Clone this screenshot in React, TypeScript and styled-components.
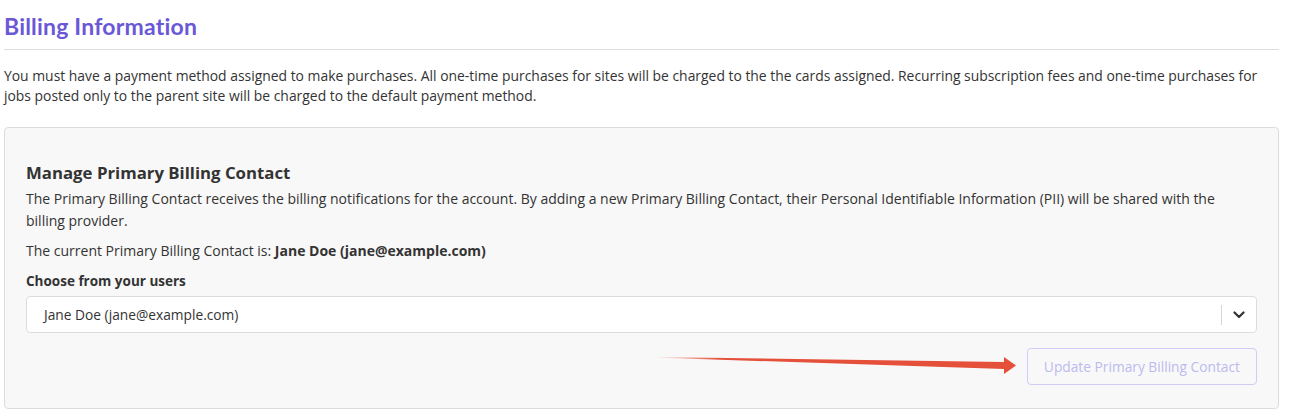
import React, { useState } from 'react'
import styled, { createGlobalStyle } from 'styled-components'

const GlobalStyle = createGlobalStyle`
  *, *::before, *::after {
    box-sizing: border-box;
  }
  body {
    margin: 0;
    background: #fff;
    font-family: "Open Sans", Lato, Arial, sans-serif;
    color: #333;
  }
`

const users = ['Jane Doe (jane@example.com)', 'John Smith (john@example.com)']

const App = () => {
  const [selected, setSelected] = useState(users[0])

  return (
    <>
      <GlobalStyle />
      <Page>
        <Title>Billing Information</Title>
        <Divider />
        <Intro>
          You must have a payment method assigned to make purchases. All one-time purchases for sites will be charged to the the cards assigned. Recurring subscription fees and one-time purchases for jobs posted only to the parent site will be charged to the default payment method.
        </Intro>
        <Card>
          <CardTitle>Manage Primary Billing Contact</CardTitle>
          <CardText>
            The Primary Billing Contact receives the billing notifications for the account. By adding a new Primary Billing Contact, their Personal Identifiable Information (PII) will be shared with the billing provider.
          </CardText>
          <CurrentLine>
            The current Primary Billing Contact is: <strong>Jane Doe (jane@example.com)</strong>
          </CurrentLine>
          <FieldLabel>Choose from your users</FieldLabel>
          <SelectBox>
            <SelectValue>{selected}</SelectValue>
            <SelectDivider />
            <ChevronWrap onClick={() => setSelected(selected === users[0] ? users[1] : users[0])}>
              <svg width="12" height="8" viewBox="0 0 12 8">
                <path d="M1.5 1.5 L6 6 L10.5 1.5" fill="none" stroke="#333" strokeWidth="2.2" strokeLinecap="round" strokeLinejoin="round" />
              </svg>
            </ChevronWrap>
          </SelectBox>
          <ActionRow>
            <Arrow width="370" height="24" viewBox="0 0 370 24">
              <defs>
                <linearGradient id="fade" x1="0" x2="1" y1="0" y2="0">
                  <stop offset="0" stopColor="#e5503a" stopOpacity="0" />
                  <stop offset="0.18" stopColor="#e5503a" stopOpacity="1" />
                  <stop offset="1" stopColor="#e5503a" stopOpacity="1" />
                </linearGradient>
              </defs>
              <polygon points="0,4 350,9 350,4 362,12.5 350,21 350,16 0,4.6" fill="url(#fade)" />
            </Arrow>
            <UpdateButton disabled>Update Primary Billing Contact</UpdateButton>
          </ActionRow>
        </Card>
      </Page>
    </>
  )
}

const Page = styled.div`
  padding: 12px 12px 0 4px;
`

const Title = styled.h1`
  margin: 0;
  font-family: Lato, "Open Sans", sans-serif;
  font-size: 23px;
  font-weight: 700;
  color: #6a58d8;
  line-height: 28px;
  letter-spacing: 0.2px;
`

const Divider = styled.hr`
  border: none;
  border-top: 1px solid #dcdcdc;
  margin: 9px 0 16px;
`

const Intro = styled.p`
  margin: 0 0 21px;
  font-size: 13.9px;
  line-height: 20px;
  color: #333;
`

const Card = styled.section`
  position: relative;
  background: #f8f8f8;
  border: 1px solid #dcdcdc;
  border-radius: 4px;
  padding: 33px 21px 23px;
`

const CardTitle = styled.h2`
  margin: 0 0 3px;
  font-size: 16.8px;
  font-weight: 700;
  color: #333;
  line-height: 24px;
`

const CardText = styled.p`
  margin: 0 0 8px;
  font-size: 14px;
  line-height: 22px;
  color: #333;
`

const CurrentLine = styled(CardText)`
  margin-bottom: 8px;
  strong {
    font-weight: 700;
  }
`

const FieldLabel = styled.div`
  font-size: 13.5px;
  font-weight: 700;
  line-height: 22px;
  margin-bottom: 4px;
`

const SelectBox = styled.div`
  display: flex;
  align-items: center;
  height: 37px;
  background: #fff;
  border: 1px solid #dcdcdc;
  border-radius: 4px;
`

const SelectValue = styled.div`
  flex: 1;
  padding-left: 17px;
  font-size: 13.75px;
  color: #333;
`

const SelectDivider = styled.div`
  width: 1px;
  height: 20px;
  background: #d6d6d6;
`

const ChevronWrap = styled.div`
  width: 34px;
  display: flex;
  justify-content: center;
  align-items: center;
  cursor: pointer;
`

const ActionRow = styled.div`
  position: relative;
  display: flex;
  justify-content: flex-end;
  margin-top: 15px;
`

const Arrow = styled.svg`
  position: absolute;
  left: 628px;
  top: 5px;
`

const UpdateButton = styled.button`
  height: 37px;
  padding: 0 16px;
  background: transparent;
  border: 1px solid #cfcdf7;
  border-radius: 4px;
  font-family: inherit;
  font-size: 13.75px;
  color: #bcbaf0;
`

export default App
